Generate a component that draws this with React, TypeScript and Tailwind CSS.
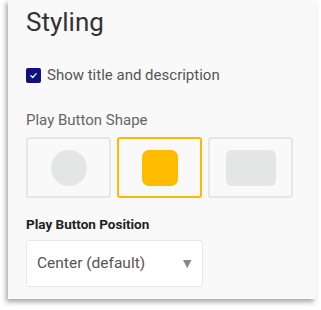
import React from "react";

export default function App() {
  return (
    <div className="w-[321px] h-[310px] bg-white overflow-hidden" style={{ fontFamily: 'Roboto, "Noto Sans", sans-serif' }}>
      <div className="ml-[8px] w-[308px] h-[299px] bg-[#f9f9f9] shadow-[-2px_3px_5px_rgba(0,0,0,0.35)] pl-[18px] pt-[5px]">
        <h2 className="text-[26px] leading-[34px] text-[#333]">Styling</h2>
        <label className="mt-[26px] flex items-center gap-[6px]">
          <span className="w-[15px] h-[15px] rounded-[2px] bg-[#10107e] flex items-center justify-center">
            <svg width="9" height="9" viewBox="0 0 10 10">
              <path d="M2 5.2 L4.2 7.2 L8 3" stroke="white" strokeWidth="1.4" fill="none" strokeLinecap="round" strokeLinejoin="round" />
            </svg>
          </span>
          <span className="text-[15px] leading-[20px] text-[#555]">Show title and description</span>
        </label>
        <div className="mt-[25px] text-[15px] leading-[20px] text-[#666]">Play Button Shape</div>
        <div className="mt-[7px] flex gap-[6px]">
          <div className="w-[85px] h-[61px] border-2 border-[#e6e6e6] rounded-[3px] flex items-center justify-center">
            <div className="w-[36px] h-[36px] rounded-full bg-[#e4e6e5]" />
          </div>
          <div className="w-[85px] h-[61px] border-2 border-[#ffba00] rounded-[3px] flex items-center justify-center">
            <div className="w-[36px] h-[36px] rounded-[7px] bg-[#ffbb00]" />
          </div>
          <div className="w-[85px] h-[61px] border-2 border-[#e6e6e6] rounded-[3px] flex items-center justify-center">
            <div className="w-[50px] h-[36px] rounded-[6px] bg-[#e4e6e5]" />
          </div>
        </div>
        <div className="mt-[17px] text-[13.5px] leading-[18px] font-bold text-[#222]">Play Button Position</div>
        <div className="mt-[7px] w-[177px] h-[47px] bg-white border border-[#e8e8e8] rounded-[3px] flex items-center justify-between pl-[10px] pr-[8px]">
          <span className="text-[15.5px] text-[#555]">Center (default)</span>
          <span className="text-[14px] text-[#888]">▼</span>
        </div>
      </div>
    </div>
  );
}
